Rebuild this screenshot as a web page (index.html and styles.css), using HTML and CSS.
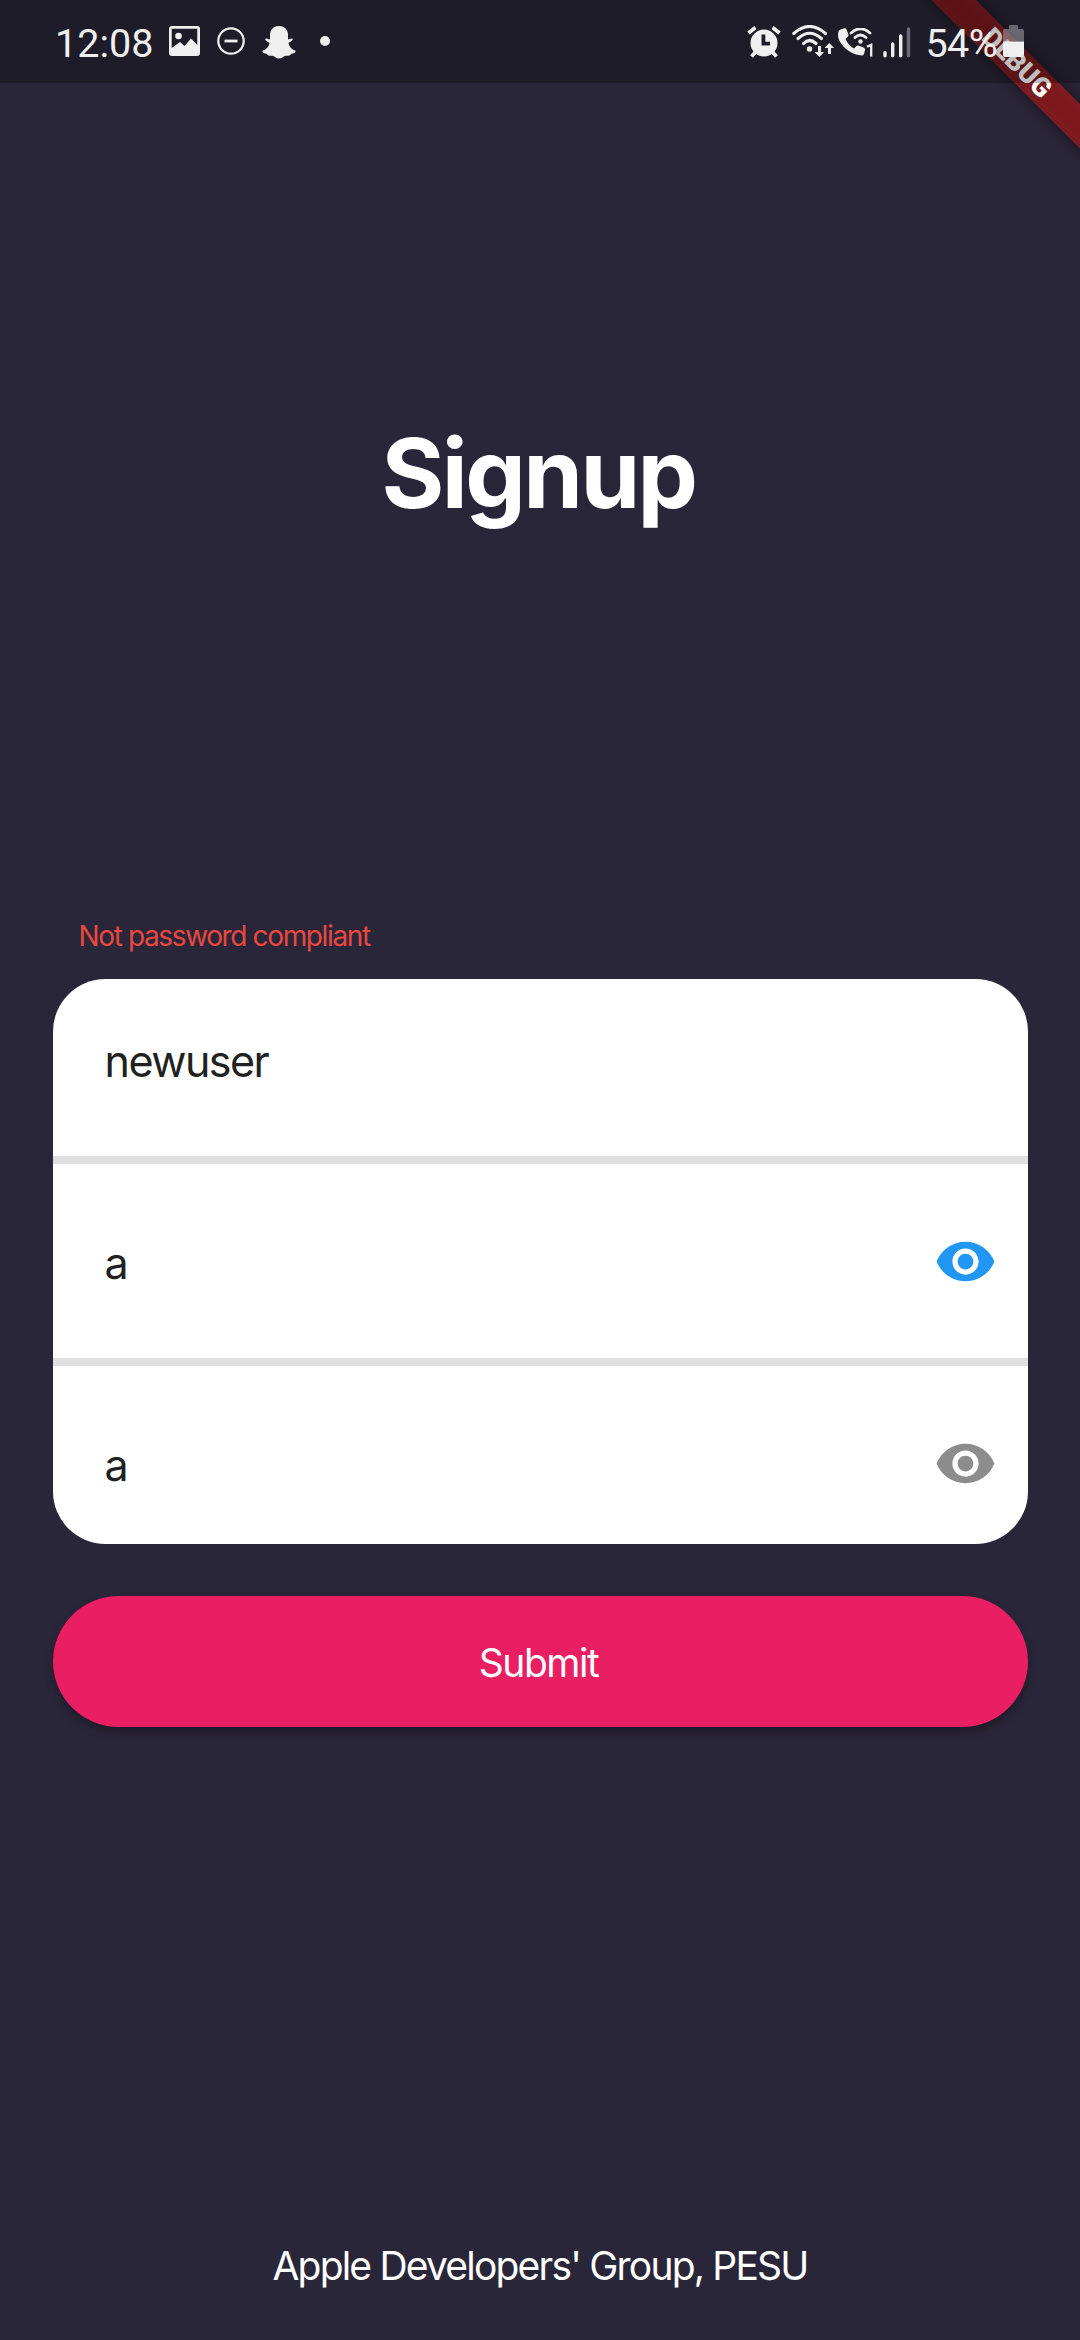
FILE: index.html
```html
<!DOCTYPE html>
<html lang="en">
<head>
<meta charset="utf-8">
<title>Signup</title>
<link rel="stylesheet" href="styles.css">
</head>
<body>
<div class="screen">
  <svg class="debug-banner" width="160" height="160" viewBox="0 0 160 160">
    <defs><filter id="soft" x="-20%" y="-100%" width="140%" height="300%"><feGaussianBlur stdDeviation="8"/></filter></defs>
    <g transform="translate(160 0) rotate(45)">
      <rect x="-125" y="73.5" width="250" height="31.5" fill="#000" fill-opacity=".5" filter="url(#soft)"/>
      <rect x="-125" y="73.5" width="250" height="31.5" fill="#b71c1c" fill-opacity=".627"/>
      <text class="debug-text" x="0" y="98" text-anchor="middle">DEBUG</text>
    </g>
  </svg>

  <header class="status-bar">
    <div class="status-left">
      <span class="clock">12:08</span>
      <svg class="i-photo" width="31" height="30" viewBox="0 0 31 30"><path fill-rule="evenodd" d="M3 0H28Q31 0 31 3V27Q31 30 28 30H3Q0 30 0 27V3Q0 0 3 0ZM2.7 2.7V22L11 16L15.5 20L22 12.500L28.300 19V2.700Z"/><circle cx="9.500" cy="10" r="3.300"/></svg>
      <svg class="i-dnd" width="28" height="28" viewBox="0 0 28 28"><circle cx="14" cy="14" r="12.700" class="line" stroke-width="2.200"/><path d="M7.500 14H20.500" class="line" stroke-width="2.800"/></svg>
      <svg class="i-ghost" width="34" height="33" viewBox="0 0 34 33"><path d="M17 0C23 0 26 4 26 9V13.500C27.500 13.500 28.500 12.300 30 12.500C31.500 13 31 14.500 26.500 17C27 20.500 29.500 23.500 33.500 24.700C34 26.500 31.500 27.500 29 28C28.500 29.500 27.500 29.800 24 29.700C21.500 30 20 32.500 17 32.500S12.500 30 10 29.700C6.500 29.800 5.500 29.500 5 28C2.500 27.500 0 26.500 .5 24.700C4.500 23.500 7 20.500 7.500 17C3 14.500 2.500 13 4 12.500C5.500 12.300 6.500 13.500 8 13.500V9C8 4 11 0 17 0Z"/></svg>
      <span class="dot"></span>
    </div>
    <div class="status-right">
      <svg class="i-alarm" width="34" height="32" viewBox="0 0 34 32"><path fill-rule="evenodd" d="M17 3.500A13.500 13.500 0 1 1 17 30.500A13.500 13.500 0 1 1 17 3.500ZM14.500 8.500V19.500H23V15.800H18.300V8.500Z"/><path class="line" stroke-width="3.800" d="M1.500 7L8.500 1.500M25.500 1.500L32.500 7M4.500 30.500L8.500 26M29.500 30.500L25.500 26"/></svg>
      <svg class="i-wifi" width="42" height="33" viewBox="0 0 42 33"><path class="line round" stroke-width="3.100" d="M1.800 8.500Q17.500-5.500 33.500 8.500M6 13.500Q17.500 3 29.500 13.500M11.500 18.500Q17.500 12.500 24 18.500"/><circle cx="17.500" cy="24" r="2.700"/><path d="M26 21H29V27H32L27.500 32L22.500 27H26ZM36 29H39V23H42L37.300 18L32.500 23H36Z"/></svg>
      <svg class="i-call" width="36" height="29" viewBox="0 0 36 29"><path d="M2.500 1.500L6.500 .3Q8 0 8.500 1.500L10.500 6.500Q10.800 8 9.500 9L7.500 11Q10 17 16 20.500L18.500 18Q19.500 17.300 21 17.800L26 19.800Q27.300 20.500 27 22L26 26Q25.500 27.500 23.500 27.500Q12 26 5.500 18.500T.2 5Q.3 2.300 2.500 1.500Z"/><path class="line round" stroke-width="2.700" d="M13 5Q22.500-3.500 32 5M17 9.500Q22.500 4.500 28 9.500"/><circle cx="22.500" cy="13.500" r="2.200"/><path class="line" stroke-width="2.300" d="M29 18.800L33.200 16.800V28.500"/></svg>
      <svg class="i-signal" width="28" height="31" viewBox="0 0 28 31"><path class="line round" stroke-width="3.400" d="M2 25.500V28.800M9.700 17V28.800M17.700 9V28.800"/><path class="line round faint" stroke-width="3.400" d="M25.500 2V28.800"/></svg>
      <span class="percent">54%</span>
      <svg class="i-battery" width="21" height="32" viewBox="0 0 21 32"><path class="dim" d="M6 4V1Q6 0 7 0H14Q15 0 15 1V4H19Q21 4 21 6V16.500H0V6Q0 4 2 4Z"/><path d="M0 16.500H21V30Q21 32 19 32H2Q0 32 0 30Z"/></svg>
    </div>
  </header>

  <main class="content">
    <h1 class="title">Signup</h1>
    <p class="error">Not password compliant</p>
    <section class="card">
      <div class="field"><span>newuser</span></div>
      <div class="field field-mid"><span>a</span>
        <svg class="eye eye-on" width="63" height="63" viewBox="0 0 24 24"><path d="M12 4.500C7 4.500 2.730 7.610 1 12c1.730 4.390 6 7.500 11 7.500s9.270-3.110 11-7.500c-1.730-4.390-6-7.500-11-7.500zM12 17c-2.760 0-5-2.240-5-5s2.240-5 5-5 5 2.240 5 5-2.240 5-5 5zm0-8c-1.660 0-3 1.340-3 3s1.340 3 3 3 3-1.340 3-3-1.340-3-3-3z"/></svg>
      </div>
      <div class="field field-last"><span>a</span>
        <svg class="eye eye-off" width="63" height="63" viewBox="0 0 24 24"><path d="M12 4.500C7 4.500 2.730 7.610 1 12c1.730 4.390 6 7.500 11 7.500s9.270-3.110 11-7.500c-1.730-4.390-6-7.500-11-7.500zM12 17c-2.760 0-5-2.240-5-5s2.240-5 5-5 5 2.240 5 5-2.240 5-5 5zm0-8c-1.660 0-3 1.340-3 3s1.340 3 3 3 3-1.340 3-3-1.340-3-3-3z"/></svg>
      </div>
    </section>
    <button class="submit">Submit</button>
  </main>
  <footer class="footer">Apple Developers' Group, PESU</footer>
</div>
</body>
</html>
```
FILE: styles.css
```css
* { box-sizing: border-box; }
body { margin: 0; background: #2a2639; }
.screen {
  position: relative;
  display: flex;
  flex-direction: column;
  width: 1080px;
  height: 2340px;
  overflow: hidden;
  background: #2a2639;
  font-family: Inter, "Liberation Sans", sans-serif;
}
svg { display: block; flex: none; }

.debug-banner { position: absolute; top: 0; right: 0; }
.debug-text { font: 900 26.8px Roboto, sans-serif; fill: #fff; }

.status-bar {
  position: relative;
  display: flex;
  justify-content: space-between;
  align-items: flex-start;
  height: 83px;
  padding: 0 56px 0 55px;
  background: rgba(0, 0, 0, .25);
  color: #efefef;
  fill: #efefef;
  font-family: Roboto, sans-serif;
  font-size: 39.5px;
  line-height: 46px;
}
.status-left, .status-right { display: flex; align-items: flex-start; }
.clock, .percent { margin-top: 21px; }
.percent { letter-spacing: -.6px; }
.line { fill: none; stroke: #efefef; }
.round { stroke-linecap: round; }
.faint { stroke: #6c6a75; }
.dim { fill: #9b9a9f; fill-opacity: .6; }
.i-photo { margin: 26px 0 0 15.5px; }
.i-dnd { margin: 27px 0 0 17.5px; }
.i-ghost { margin: 26px 0 0 16.5px; }
.dot { width: 10px; height: 10px; margin: 36px 0 0 24.5px; border-radius: 50%; background: #efefef; }
.i-alarm { margin: 26px 11px 0 0; }
.i-wifi { margin: 25px 4px 0 0; }
.i-call { margin: 28px 9px 0 0; }
.i-signal { margin: 27px 14px 0 0; }
.i-battery { margin: 25px 0 0 6px; }

.content { display: flex; flex-direction: column; flex: 1; padding: 0 52.5px; }
.title {
  margin: 332px 0 0;
  padding-right: 3px;
  text-align: center;
  color: #fff;
  font-size: 96px;
  font-weight: 700;
  line-height: 116px;
  letter-spacing: -2.6px;
}
.error {
  margin: 388px 0 0 26px;
  color: #e8483f;
  font-size: 28px;
  line-height: 34px;
  letter-spacing: -1.37px;
}
.card {
  display: flex;
  flex-direction: column;
  height: 564.5px;
  margin-top: 26px;
  border-radius: 52.5px;
  overflow: hidden;
  background: #fff;
}
.field {
  display: flex;
  justify-content: space-between;
  height: 177px;
  padding: 56px 31px 0 52px;
  color: #212121;
  font-size: 43px;
  line-height: 52px;
  letter-spacing: -1.5px;
}
.field-mid { height: 210px; padding-top: 73px; border: solid #e0e0e0; border-width: 8px 0; }
.field-last { padding-top: 73px; }
.eye { margin-top: -7px; }
.eye-on { fill: #2196f3; }
.eye-off { fill: #8c8c8c; }
.submit {
  height: 131px;
  margin-top: 52.5px;
  padding: 2px 3px 0 0;
  border: 0;
  border-radius: 65.5px;
  background: #e91e63;
  box-shadow: 0 5px 8px rgba(0, 0, 0, .3);
  color: #fff;
  font-family: inherit;
  font-size: 39px;
  letter-spacing: -1.5px;
}
.footer {
  padding-bottom: 50px;
  text-align: center;
  color: #fff;
  font-size: 39px;
  line-height: 48px;
  letter-spacing: -1.8px;
}
```
